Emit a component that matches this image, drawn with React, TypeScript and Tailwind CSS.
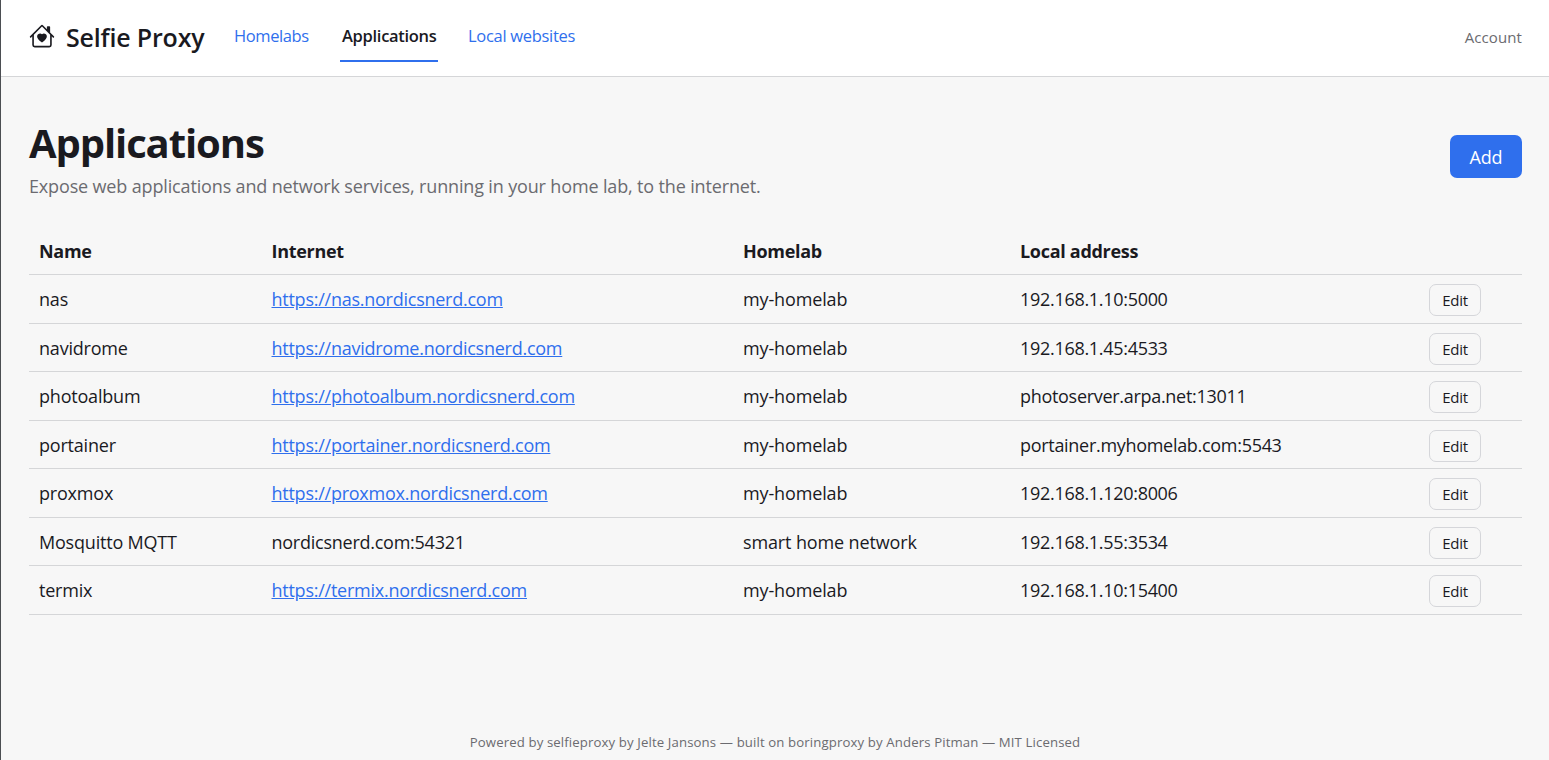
import React from "react";
import { BsHouseHeart } from "react-icons/bs";

interface Application {
  name: string;
  internet: string;
  homelab: string;
  address: string;
}

const navLinks = [
  { name: "Homelabs", href: "#homelabs", style: "w-[76px] text-[#2f6fed] tracking-[-0.4px]" },
  { name: "Applications", href: "#applications", active: true, style: "w-[94px] font-semibold text-[#1a1a1f] tracking-[-0.3px]" },
  { name: "Local websites", href: "#websites", style: "w-[107px] text-[#2f6fed] tracking-[-0.3px]" },
];

const applications: Application[] = [
  { name: "nas", internet: "https://nas.nordicsnerd.com", homelab: "my-homelab", address: "192.168.1.10:5000" },
  { name: "navidrome", internet: "https://navidrome.nordicsnerd.com", homelab: "my-homelab", address: "192.168.1.45:4533" },
  { name: "photoalbum", internet: "https://photoalbum.nordicsnerd.com", homelab: "my-homelab", address: "photoserver.arpa.net:13011" },
  { name: "portainer", internet: "https://portainer.nordicsnerd.com", homelab: "my-homelab", address: "portainer.myhomelab.com:5543" },
  { name: "proxmox", internet: "https://proxmox.nordicsnerd.com", homelab: "my-homelab", address: "192.168.1.120:8006" },
  { name: "Mosquitto MQTT", internet: "nordicsnerd.com:54321", homelab: "smart home network", address: "192.168.1.55:3534" },
  { name: "termix", internet: "https://termix.nordicsnerd.com", homelab: "my-homelab", address: "192.168.1.10:15400" },
];

const Header: React.FC = () => (
  <header className="flex h-[77px] shrink-0 items-center justify-between border-b border-[#d5d6d8] bg-white pl-[28px] pr-[27px]">
    <div className="flex items-center">
      {/* Logo */}
      <a href="#home" className="flex w-[203px] items-center gap-[11px] pb-[2px] text-[#1a1a1f]">
        <BsHouseHeart size={26} className="-mt-[3px] shrink-0" />
        <span className="whitespace-nowrap text-[25px] font-semibold leading-[34px] tracking-[-0.18px]">Selfie Proxy</span>
      </a>

      <nav className="flex h-[76px] items-center gap-[28px] whitespace-nowrap pt-[10px] text-[16.5px]">
        {navLinks.map((link) => (
          <a
            key={link.name}
            href={link.href}
            className={`box-content h-[36px] border-b-2 px-[2px] leading-[24px] ${link.style} ${
              link.active ? "border-[#2f6fed]" : "border-transparent"
            }`}
          >
            {link.name}
          </a>
        ))}
      </nav>
    </div>

    <a href="#account" className="pb-[2px] text-[15px] leading-[22px] tracking-[0.1px] text-[#6b6b70]">
      Account
    </a>
  </header>
);

export default function App() {
  return (
    <div className="flex h-[760px] flex-col overflow-hidden border-l border-[#4b4e52] bg-[#f7f7f7] font-['Open_Sans',sans-serif] text-[#1a1a1f]">
      <Header />

      <main className="grow pl-[28px] pr-[27px] pt-[39px]">
        <div className="flex items-start justify-between">
          <div>
            <h1 className="text-[40px] font-bold leading-[54px] tracking-[-1.1px]">Applications</h1>
            <p className="mt-[2px] text-[18px] leading-[28px] tracking-[-0.15px] text-[#6b6b70]">
              Expose web applications and network services, running in your home lab, to the internet.
            </p>
          </div>
          <button className="mt-[19px] h-[43px] w-[72px] rounded-[7px] bg-[#2f6fed] pt-[2px] text-[18px] tracking-[-0.2px] text-white">
            Add
          </button>
        </div>

        <table className="mt-[28px] w-full table-fixed border-separate border-spacing-0 text-left text-[18px] leading-[26px] tracking-[-0.3px]">
          <colgroup>
            <col className="w-[232.5px]" />
            <col className="w-[471.5px]" />
            <col className="w-[277px]" />
            <col className="w-[409px]" />
            <col />
          </colgroup>
          <thead>
            <tr className="h-[47px] [&>th]:border-b [&>th]:border-[#d5d6d8] [&>th]:px-[10px] [&>th]:font-bold">
              <th>Name</th>
              <th>Internet</th>
              <th>Homelab</th>
              <th>Local address</th>
              <th />
            </tr>
          </thead>
          <tbody>
            {applications.map((app) => (
              <tr key={app.name} className="h-[48.56px] [&>td]:border-b [&>td]:border-[#d5d6d8] [&>td]:px-[10px] [&>td]:pt-[0.5px]">
                <td className="tracking-[-0.2px]">{app.name}</td>
                <td className="tracking-[-0.25px]">
                  {app.internet.startsWith("https") ? (
                    <a href={app.internet} className="text-[#2f6fed] underline">
                      {app.internet}
                    </a>
                  ) : (
                    app.internet
                  )}
                </td>
                <td className="tracking-[-0.13px]">{app.homelab}</td>
                <td>{app.address}</td>
                <td>
                  <button className="mt-[2px] block h-[32px] w-[52px] rounded-[7px] border border-[#d5d6da] text-[15px] leading-[22px]">
                    Edit
                  </button>
                </td>
              </tr>
            ))}
          </tbody>
        </table>
      </main>

      <footer className="pb-[8px] text-center text-[13.2px] leading-[20px] tracking-[0.12px] text-[#6b6b70]">
        Powered by selfieproxy by Jelte Jansons — built on boringproxy by Anders Pitman — MIT Licensed
      </footer>
    </div>
  );
}
